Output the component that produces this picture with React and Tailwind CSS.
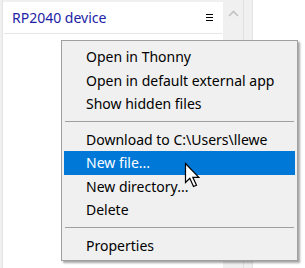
import React from 'react';

const groups = [
  ['Open in Thonny', 'Open in default external app', 'Show hidden files'],
  ['Download to C:\\Users\\llewe', 'New file...', 'New directory...', 'Delete'],
  ['Properties'],
];

const MenuItem = ({ label, active }) => (
  <div
    className={`h-[23.5px] flex items-center pl-[22px] ${
      active ? 'bg-[#0078d7] text-white' : 'text-black'
    }`}
  >
    {label}
  </div>
);

const Cursor = () => (
  <svg
    width="17"
    height="26"
    viewBox="0 0 17 26"
    className="absolute left-[184px] top-[162px]"
  >
    <path
      d="M1.5 1.5 V20.5 L5.8 16.3 L9.5 24.5 L12.5 23.2 L8.8 15.3 H14.8 Z"
      fill="#ffffff"
      stroke="#000000"
      strokeWidth="1.2"
      strokeLinejoin="miter"
    />
  </svg>
);

export default function App() {
  return (
    <div
      className="relative w-[305px] h-[268px] flex bg-[#f0f0f0] overflow-hidden"
      style={{ fontFamily: '"Noto Sans", "Open Sans", sans-serif' }}
    >
      {/* left strip */}
      <div className="w-[3px] border-r border-[#e3e3e3]" />

      {/* files panel */}
      <div className="w-[220px] mt-[2px] bg-white">
        <div className="h-[32px] mx-[1px] flex items-center justify-between pl-[8px] pr-[8px] border-b border-[#e6e6e6]">
          <span className="text-[14px] text-[#2222a6]">RP2040 device</span>
          <svg width="9" height="8" viewBox="0 0 9 8">
            <rect x="1" y="0" width="7" height="1" fill="#000" />
            <rect x="1" y="3" width="7" height="1" fill="#000" />
            <rect x="1" y="6" width="7" height="1" fill="#000" />
          </svg>
        </div>
      </div>

      {/* scrollbar */}
      <div className="w-[21px] border-r border-[#e0e0e0] flex justify-center pt-[10px]">
        <svg width="11" height="7" viewBox="0 0 11 7">
          <path d="M1 6 L5.5 1.5 L10 6" fill="none" stroke="#c2c2c2" strokeWidth="1.6" />
        </svg>
      </div>
      <div className="w-[9px] border-r border-[#e3e3e3]" />
      <div className="flex-1 bg-white" />

      {/* context menu */}
      <div className="absolute left-[61px] top-[40px] w-[237px] bg-[#f0f0f0] border border-[#a0a0a0] px-[2px] pt-[4px] pb-[3px] text-[14px] shadow-[2px_2px_2px_rgba(0,0,0,0.35)]">
        {groups.map((items, gi) => (
          <div key={gi}>
            {gi > 0 && (
              <div className="h-[12px] flex items-center px-[1px]">
                <div className="w-full h-px bg-[#a0a0a0]" />
              </div>
            )}
            {items.map((label) => (
              <MenuItem key={label} label={label} active={label === 'New file...'} />
            ))}
          </div>
        ))}
      </div>

      <Cursor />
    </div>
  );
}
